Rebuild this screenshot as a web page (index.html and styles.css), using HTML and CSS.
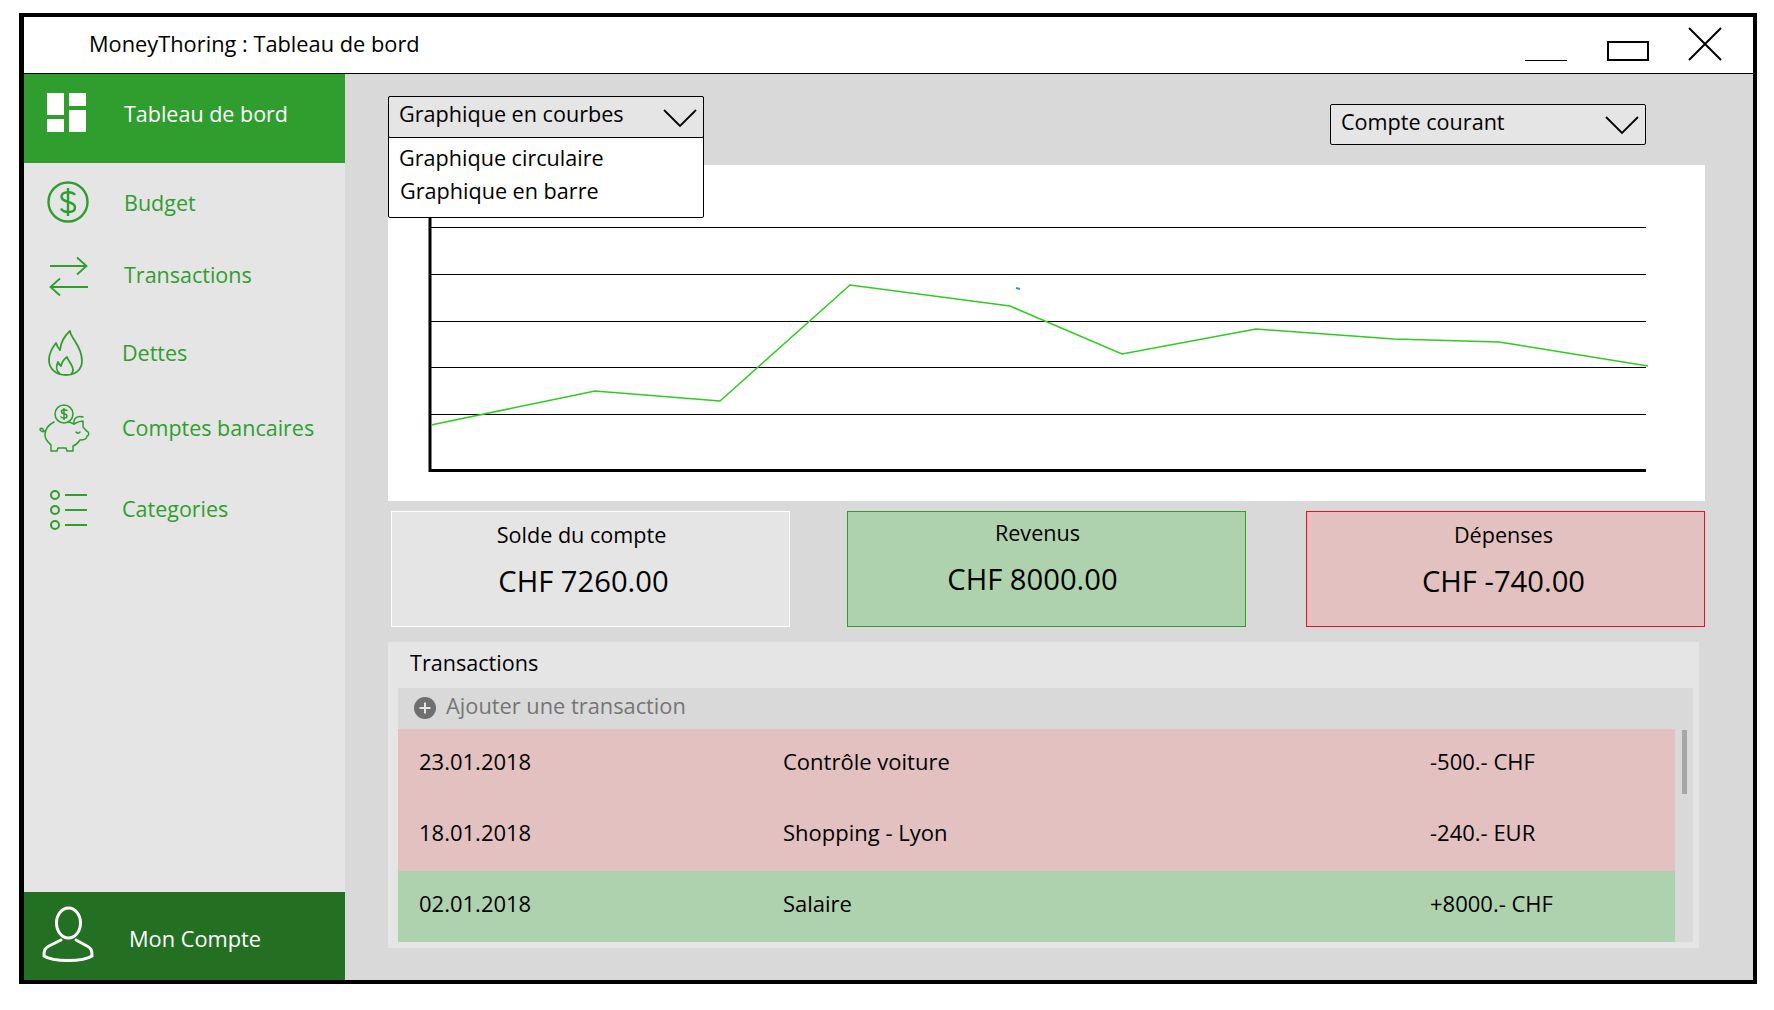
FILE: index.html
```html
<!DOCTYPE html>
<html>

	<head>
		<meta charset="utf-8">
		<title>MoneyThoring : Tableau de bord</title>
		<link rel="stylesheet" href="styles.css">
	</head>

	<body>
		<div class="window">
			<div class="titlebar">
				<div class="app-title">MoneyThoring : Tableau de bord</div>
				<div class="win-min"></div>
				<div class="win-max"></div>
				<svg class="win-close" width="34" height="34" viewBox="0 0 34 34">
					<path d="M1 1L33 33M33 1L1 33" fill="none" stroke="#000" stroke-width="2"/>
				</svg>
			</div>
			<div class="content">
				<div class="sidebar">
					<div class="nav-item nav-active">
						<div class="nav-icon">
							<svg width="40" height="40" viewBox="0 0 40 40" fill="#fff">
								<rect x="0" y="0" width="17" height="22"/>
								<rect x="0" y="26" width="17" height="13"/>
								<rect x="22" y="0" width="17" height="13"/>
								<rect x="22" y="17" width="17" height="22"/>
							</svg>
						</div>
						<span>Tableau de bord</span>
					</div>
					<div class="nav-item nav-budget">
						<div class="nav-icon">
							<svg width="44" height="44" viewBox="0 0 44 44" fill="none" stroke="#2f9e2f" stroke-width="2.400">
								<circle cx="22" cy="22" r="19.500"/>
								<path d="M29 15C27 11.500 16 10.500 15.500 16.500C15 23 29 20.500 29 27.500C29 33.500 17 33 15 28.500"/>
								<path d="M22 8V36"/>
							</svg>
						</div>
						<span>Budget</span>
					</div>
					<div class="nav-item nav-transactions">
						<div class="nav-icon">
							<svg width="44" height="44" viewBox="0 0 44 44" fill="none" stroke="#2f9e2f" stroke-width="1.800">
								<path d="M3 12H39M30 3.500L39.500 12L30 20.500"/>
								<path d="M41 33H4M13 24.500L3.500 33L13 41.500"/>
							</svg>
						</div>
						<span>Transactions</span>
					</div>
					<div class="nav-item nav-dettes nav-narrow">
						<div class="nav-icon">
							<svg width="44" height="50" viewBox="0 0 44 50" fill="none" stroke="#2f9e2f" stroke-width="1.800" stroke-linejoin="round">
								<path d="M24 2C25 10 36 17 36 32C36 41 29 46 20 46C10 46 3 40 3 31C3 24 6 19 10 14C11 17 12 19 14 21C15 13 18 7 24 2Z"/>
								<path d="M14 45C10 42 10 37 12 33C13 35 14 36 15 37C16 33 18 30 21 28C22 32 27 36 27 41C27 43 26 44 25 46"/>
							</svg>
						</div>
						<span>Dettes</span>
					</div>
					<div class="nav-item nav-comptes nav-narrow">
						<div class="nav-icon">
							<svg width="56" height="52" viewBox="0 0 56 52" fill="none" stroke="#2f9e2f" stroke-width="1.500" stroke-linejoin="round" stroke-linecap="round">
								<circle cx="25" cy="12" r="9"/>
								<path d="M28 8.500C26 7 22 7.500 22.500 10C23 12.500 28 11 28 14C28 16.500 24 16.500 22 15M25 6.500V17.500"/>
								<path d="M15 20C9 23 6 28 6 33C6 38 10 41 12 43V49H18L19 46H27L28 49H34V44C37 43 39 41 41 38C45 38 48 37 48 34C50 34 50 31 49 30C47 29 46 27 44 25C44 23 44 21 44 19C40 19 37 21 35 22C33 21 31 20 29 20"/>
								<path d="M35 22C34 17 38 13 44 15"/>
								<path d="M37 30C38 31.500 40 31.500 41 30"/>
								<path d="M6 29C3 30 1 29 1 27C3 25 5 27 4 30"/>
							</svg>
						</div>
						<span>Comptes bancaires</span>
					</div>
					<div class="nav-item nav-categories nav-narrow">
						<div class="nav-icon">
							<svg width="44" height="44" viewBox="0 0 44 44" fill="none" stroke="#2f9e2f" stroke-width="2">
								<circle cx="9" cy="7" r="4"/>
								<circle cx="9" cy="22" r="4"/>
								<circle cx="9" cy="37" r="4"/>
								<path d="M19 7H41M19 22H41M19 37H41"/>
							</svg>
						</div>
						<span>Categories</span>
					</div>
					<div class="nav-item nav-account">
						<div class="nav-icon">
							<svg width="54" height="62" viewBox="0 0 54 62" fill="none" stroke="#fff" stroke-width="3" stroke-linecap="round">
								<ellipse cx="26.500" cy="17" rx="12" ry="15"/>
								<path d="M19 34L7 40C3 42 2 44 2 50C11 56 41 56 50 50C50 44 49 42 45 40L34 34"/>
							</svg>
						</div>
						<span>Mon Compte</span>
					</div>
				</div>

				<div class="main">
					<div class="topbar">
						<div class="select select-account">
							<span>Compte courant</span>
							<svg class="chevron" width="34" height="20" viewBox="0 0 34 20">
								<path d="M1 2L17 18L33 2" fill="none" stroke="#000" stroke-width="1.800"/>
							</svg>
						</div>
					</div>

					<div class="chart-menu">
						<div class="select select-chart">
							<span>Graphique en courbes</span>
							<svg class="chevron" width="34" height="20" viewBox="0 0 34 20">
								<path d="M1 2L17 18L33 2" fill="none" stroke="#000" stroke-width="1.800"/>
							</svg>
						</div>
						<div class="menu-option">Graphique circulaire</div>
						<div class="menu-option menu-option-last">Graphique en barre</div>
					</div>

					<div class="chart">
						<svg width="1317" height="336" viewBox="0 0 1317 336">
							<g stroke="#000" stroke-width="1" shape-rendering="crispEdges">
								<path d="M42 62.500H1258M42 109.500H1258M42 156.500H1258M42 202.500H1258M42 249.500H1258"/>
							</g>
							<path d="M42 50V305.500H1258" fill="none" stroke="#000" stroke-width="3"/>
							<path d="M43 260L207 226L332 236L462 120L622 141L734 189L868 164L1006 174L1111 177L1260 201" fill="none" stroke="#2ecc1e" stroke-width="1.500"/>
							<path d="M628 123L632 124" stroke="#1c9cd8" stroke-width="2"/>
						</svg>
					</div>

					<div class="cards">
						<div class="card card-solde">
							<div class="card-label">Solde du compte</div>
							<div class="card-value">CHF 7260.00</div>
						</div>
						<div class="card card-revenus">
							<div class="card-label">Revenus</div>
							<div class="card-value">CHF 8000.00</div>
						</div>
						<div class="card card-depenses">
							<div class="card-label">Dépenses</div>
							<div class="card-value">CHF -740.00</div>
						</div>
					</div>

					<div class="transactions">
						<div class="transactions-title">Transactions</div>
						<div class="transactions-inner">
							<div class="add-row">
								<svg width="22" height="22" viewBox="0 0 22 22">
									<circle cx="11" cy="11" r="11" fill="#6f6f6f"/>
									<path d="M5.500 11H16.500M11 5.500V16.500" stroke="#e5e5e5" stroke-width="2"/>
								</svg>
								<span>Ajouter une transaction</span>
							</div>
							<div class="list">
								<div class="rows">
									<div class="row row-out">
										<span>23.01.2018</span>
										<span>Contrôle voiture</span>
										<span>-500.- CHF</span>
									</div>
									<div class="row row-out">
										<span>18.01.2018</span>
										<span>Shopping - Lyon</span>
										<span>-240.- EUR</span>
									</div>
									<div class="row row-in">
										<span>02.01.2018</span>
										<span>Salaire</span>
										<span>+8000.- CHF</span>
									</div>
								</div>
								<div class="scrollbar">
									<div class="thumb"></div>
								</div>
							</div>
						</div>
					</div>
				</div>
			</div>
		</div>
	</body>

</html>
```

FILE: styles.css
```css
html, body {
	margin: 0;
	padding: 0;
	background-color: #fff;
}
body {
	font-family: "Open Sans", "Noto Sans", sans-serif;
	font-size: 21.600px;
	color: #000;
}
.window {
	box-sizing: border-box;
	display: flex;
	flex-direction: column;
	width: 1738px;
	height: 971px;
	margin: 13px 0 0 19px;
	border: solid 4px #000;
	border-left-width: 5px;
}
.titlebar {
	display: flex;
	align-items: flex-start;
	flex: none;
	box-sizing: border-box;
	height: 57px;
	border-bottom: solid 1px #000;
	background-color: #fff;
}
.app-title {
	margin: 10px 0 0 65px;
	width: 1436px;
	font-size: 21.800px;
	line-height: 34px;
	white-space: nowrap;
}
.win-min {
	width: 42px;
	height: 1px;
	margin-top: 43px;
	background-color: #000;
}
.win-max {
	box-sizing: border-box;
	width: 42px;
	height: 20px;
	margin: 24px 0 0 40px;
	border: solid 2px #000;
}
.win-close {
	margin: 10px 0 0 39px;
}
.content {
	display: flex;
	flex: 1;
	min-height: 0;
}
.sidebar {
	display: flex;
	flex-direction: column;
	flex: none;
	width: 321px;
	background-color: #e5e5e5;
}
.nav-item {
	display: flex;
	align-items: center;
	flex: none;
	font-size: 21.500px;
	color: #2f9e2f;
}
.nav-item span {
	padding-bottom: 4px;
}
.nav-icon {
	display: flex;
	align-items: center;
	flex: none;
	width: 100px;
	padding-left: 22px;
	box-sizing: border-box;
}
.nav-narrow .nav-icon {
	width: 98px;
}
.nav-active {
	height: 89px;
	padding-bottom: 8px;
	box-sizing: border-box;
	background-color: #2f9e2f;
	color: #fff;
}
.nav-active .nav-icon {
	padding-left: 23px;
	padding-bottom: 4px;
}
.nav-active span {
	padding-bottom: 2px;
}
.nav-budget {
	height: 82px;
}
.nav-budget .nav-icon {
	padding-bottom: 4px;
}
.nav-transactions {
	height: 64px;
}
.nav-transactions .nav-icon {
	padding-bottom: 2px;
	padding-left: 23px;
}
.nav-transactions span {
	padding-bottom: 5px;
}
.nav-dettes {
	height: 90px;
}
.nav-comptes {
	height: 60px;
}
.nav-comptes .nav-icon {
	padding-bottom: 2px;
	padding-left: 15px;
}
.nav-categories {
	height: 102px;
}
.nav-account {
	height: 88px;
	margin-top: auto;
	background-color: #237023;
	color: #fff;
	font-size: 21.800px;
}
.nav-account .nav-icon {
	width: 105px;
	padding: 2px 0 0 18px;
}
.nav-account span {
	padding: 5px 0 0;
}
.main {
	position: relative;
	flex: 1;
	background-color: #d9d9d9;
}
.topbar {
	display: flex;
	justify-content: flex-end;
	box-sizing: border-box;
	height: 91px;
	padding: 30px 107px 0 0;
}
.select {
	display: flex;
	align-items: center;
	justify-content: space-between;
	box-sizing: border-box;
	height: 41px;
	padding: 0 6px 0 10px;
	border: solid 1px #000;
	border-radius: 2px;
	background-color: #e5e5e5;
}
.select span {
	padding-bottom: 6px;
}
.select-account {
	width: 316px;
}
.select-chart {
	height: 42px;
	margin: -1px;
}
.select-chart span {
	padding-bottom: 8px;
}
.chevron {
	margin-top: 1px;
}
.chart-menu {
	position: absolute;
	top: 22px;
	left: 43px;
	box-sizing: border-box;
	width: 316px;
	height: 122px;
	border: solid 1px #000;
	border-radius: 2px;
	background-color: #fff;
}
.menu-option {
	padding-left: 10px;
	height: 33px;
	line-height: 33px;
}
.select-chart + .menu-option {
	margin-top: 4px;
}
.menu-option-last {
	padding-left: 11px;
}
.chart {
	width: 1317px;
	height: 336px;
	margin-left: 43px;
	background-color: #fff;
}
.chart svg {
	display: block;
}
.cards {
	display: flex;
	margin: 10px 0 0 46px;
}
.card {
	box-sizing: border-box;
	width: 399px;
	height: 116px;
	padding-top: 6px;
	border: solid 1px #fff;
	background-color: #e5e5e5;
	text-align: center;
}
.card-label {
	line-height: 34px;
}
.card-value {
	margin-top: 9px;
	font-size: 29.200px;
	line-height: 40px;
}
.card-solde {
	padding-right: 18px;
}
.card-solde .card-value {
	padding-left: 4px;
}
.card-revenus {
	margin-left: 57px;
	padding-top: 4px;
	padding-right: 18px;
	border-color: #2f9e2f;
	background-color: #afd2ae;
}
.card-revenus .card-value {
	padding-right: 10px;
}
.card-depenses {
	margin-left: 60px;
	padding-right: 4px;
	border-color: #e81123;
	background-color: #e3c1c0;
}
.transactions {
	box-sizing: border-box;
	width: 1311px;
	height: 306px;
	margin: 15px 0 0 43px;
	padding: 0 6px 6px 10px;
	background-color: #e5e5e5;
}
.transactions-title {
	height: 46px;
	padding: 4px 0 0 12px;
	box-sizing: border-box;
	line-height: 34px;
}
.transactions-inner {
	background-color: #d9d9d9;
}
.add-row {
	display: flex;
	align-items: center;
	gap: 10px;
	box-sizing: border-box;
	height: 41px;
	padding: 0 0 0 16px;
	color: #757575;
}
.add-row span {
	padding-bottom: 6px;
	font-size: 21.800px;
}
.add-row svg {
	margin-bottom: 2px;
}
.list {
	display: flex;
}
.rows {
	flex: 1;
}
.row {
	display: grid;
	grid-template-columns: 364px 647px 1fr;
	align-items: center;
	box-sizing: border-box;
	height: 71px;
	padding: 0 0 8px 21px;
	font-size: 22px;
}
.row-out {
	background-color: #e3c1c0;
}
.row-in {
	background-color: #afd2ae;
}
.scrollbar {
	flex: none;
	width: 18px;
	padding: 1px 0 0 7px;
	box-sizing: border-box;
}
.thumb {
	width: 5px;
	height: 64px;
	background-color: #a6a6a6;
}
```
